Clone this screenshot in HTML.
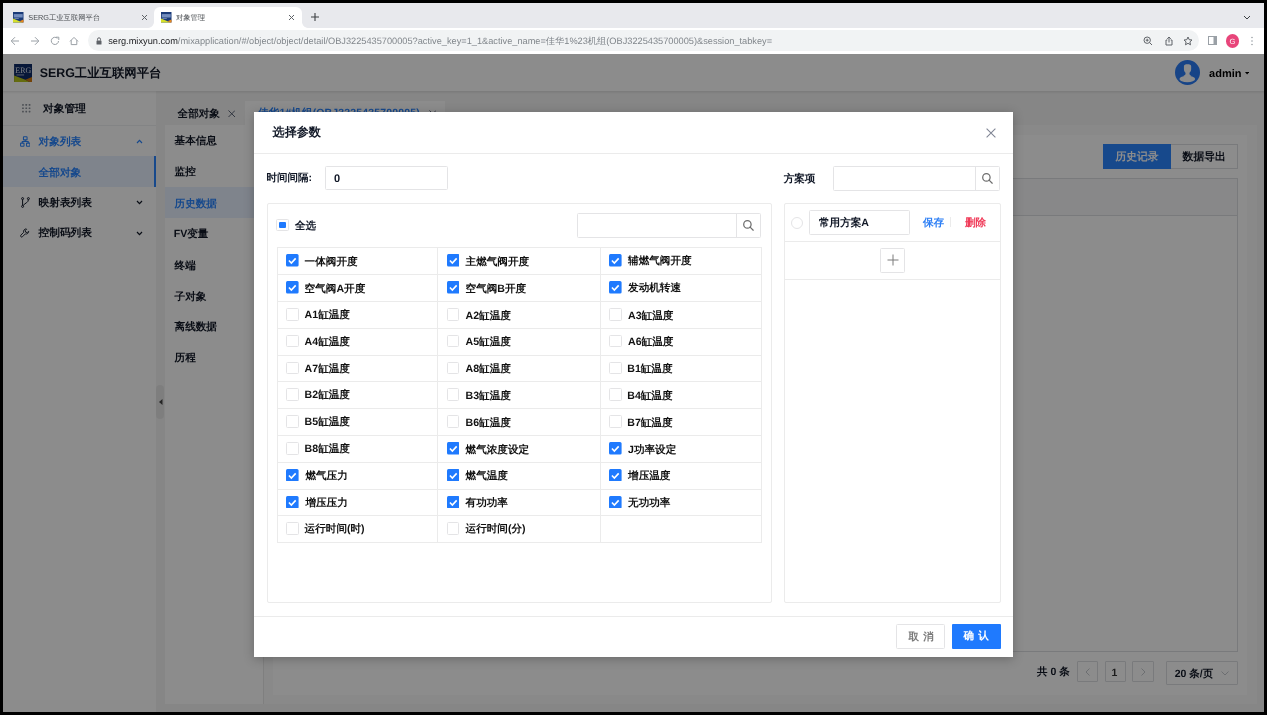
<!DOCTYPE html>
<html><head><meta charset="utf-8">
<style>
*{box-sizing:border-box;margin:0;padding:0}
html,body{width:1267px;height:715px;overflow:hidden;background:#000;font-family:"Liberation Sans",sans-serif;text-rendering:geometricPrecision}
.a{position:absolute}
.t{position:absolute;white-space:nowrap;line-height:1}
</style></head><body><div style="position:absolute;left:0;top:0;width:1267px;height:715px;background:#000;will-change:transform">
<div class="a" style="left:3px;top:3px;width:1261px;height:25px;background:#e8e9ed"></div>
<svg class="a" style="left:13.2px;top:12px" width="10.5" height="10.5" viewBox="0 0 20 20"><rect width="20" height="20" fill="#1a3a78"/><path d="M0 12.6L12.4 17.4L17.5 20H0Z" fill="#d6e02a"/><path d="M12.4 17.4L20 14.2V20H17.5Z" fill="#e8881c"/><rect x="1.5" y="4" width="17" height="6.5" fill="#8aa3cf" opacity=".8"/><rect x="2.6" y="11.6" width="8.4" height="1" fill="#b6c2da"/></svg>
<div class="t" style="left:28.32px;top:13.68px;font-size:7.3px;color:#4a4e52;">SERG工业互联网平台</div>
<svg class="a" style="left:140.8px;top:13.8px" width="7" height="7" viewBox="0 0 7 7"><path d="M1 1L6 6M6 1L1 6" stroke="#5f6368" stroke-width="1"/></svg>
<div class="a" style="left:154px;top:7px;width:148px;height:21px;background:#fff;border-radius:6px 6px 0 0"></div>
<div class="a" style="left:148px;top:22px;width:6px;height:6px;background:radial-gradient(circle at 0 0,transparent 5.5px,#fff 6.2px)"></div>
<div class="a" style="left:302px;top:22px;width:6px;height:6px;background:radial-gradient(circle at 100% 0,transparent 5.5px,#fff 6.2px)"></div>
<svg class="a" style="left:161px;top:12px" width="10.5" height="10.5" viewBox="0 0 20 20"><rect width="20" height="20" fill="#1a3a78"/><path d="M0 12.6L12.4 17.4L17.5 20H0Z" fill="#d6e02a"/><path d="M12.4 17.4L20 14.2V20H17.5Z" fill="#e8881c"/><rect x="1.5" y="4" width="17" height="6.5" fill="#8aa3cf" opacity=".8"/><rect x="2.6" y="11.6" width="8.4" height="1" fill="#b6c2da"/></svg>
<div class="t" style="left:175.88px;top:13.68px;font-size:7.3px;color:#4a4e52;">对象管理</div>
<svg class="a" style="left:288.3px;top:13.8px" width="7" height="7" viewBox="0 0 7 7"><path d="M1 1L6 6M6 1L1 6" stroke="#5f6368" stroke-width="1"/></svg>
<svg class="a" style="left:310.2px;top:12.4px" width="10" height="10" viewBox="0 0 10 10"><path d="M5 1V9M1 5H9" stroke="#3c4043" stroke-width="1.1"/></svg>
<svg class="a" style="left:1243.3px;top:15.2px" width="8" height="5" viewBox="0 0 8 5"><path d="M1 1L4 4L7 1" stroke="#3c4043" stroke-width="1" fill="none"/></svg>
<div class="a" style="left:3px;top:28px;width:1261px;height:26px;background:#fff"></div>
<svg class="a" style="left:10px;top:35.5px" width="10" height="10" viewBox="0 0 10 10"><path d="M9 5H1.5M5 1.2L1.2 5L5 8.8" stroke="#9aa0a6" stroke-width="1" fill="none"/></svg>
<svg class="a" style="left:29.5px;top:35.5px" width="10" height="10" viewBox="0 0 10 10"><path d="M1 5H8.5M5 1.2L8.8 5L5 8.8" stroke="#9aa0a6" stroke-width="1" fill="none"/></svg>
<svg class="a" style="left:49.5px;top:35.5px" width="10" height="10" viewBox="0 0 10 10"><path d="M8.5 5A3.6 3.6 0 1 1 7.4 2.3" stroke="#9aa0a6" stroke-width="1" fill="none"/><path d="M6 1.2H8.8V4" stroke="#9aa0a6" stroke-width="1" fill="none"/></svg>
<svg class="a" style="left:69px;top:36px" width="10" height="10" viewBox="0 0 10 10"><path d="M1 5.4L5 1.4L9 5.4M2.2 4.2V8.6H7.8V4.2" stroke="#9aa0a6" stroke-width="1" fill="none"/></svg>
<div class="a" style="left:88px;top:30px;width:1111px;height:21px;background:#f1f3f4;border-radius:11px"></div>
<svg class="a" style="left:95.5px;top:36.5px" width="6" height="8" viewBox="0 0 6 8"><path d="M1.5 3.5V2.3A1.5 1.5 0 0 1 4.5 2.3V3.5" stroke="#5f6368" stroke-width="1" fill="none"/><rect x="0.5" y="3.5" width="5" height="4" rx=".6" fill="#5f6368"/></svg>
<div class="t" style="left:108.20px;top:36.91px;font-size:9.23px;color:#80868b;"><span style="color:#202124">serg.mixyun.com</span>/mixapplication/#/object/object/detail/OBJ3225435700005?active_key=1_1&amp;active_name=佳华1%23机组(OBJ3225435700005)&amp;session_tabkey=</div>
<svg class="a" style="left:1143px;top:36px" width="10" height="10" viewBox="0 0 10 10"><circle cx="4.2" cy="4.2" r="3.2" stroke="#5f6368" stroke-width="1" fill="none"/><path d="M6.5 6.5L9 9M4.2 2.7V5.7M2.7 4.2H5.7" stroke="#5f6368" stroke-width="1"/></svg>
<svg class="a" style="left:1163.5px;top:35.5px" width="10" height="10" viewBox="0 0 10 10"><path d="M3.3 4H2V9H8V4H6.7M5 6.5V1M3.2 2.8L5 1L6.8 2.8" stroke="#5f6368" stroke-width="1" fill="none"/></svg>
<svg class="a" style="left:1183px;top:35.5px" width="10" height="10" viewBox="0 0 10 10"><path d="M5 1L6.2 3.7L9 4L6.9 5.9L7.5 8.8L5 7.3L2.5 8.8L3.1 5.9L1 4L3.8 3.7Z" stroke="#5f6368" stroke-width="1" fill="none" stroke-linejoin="round"/></svg>
<svg class="a" style="left:1207.5px;top:36px" width="10" height="9" viewBox="0 0 10 9"><rect x=".5" y=".5" width="8" height="8" stroke="#9aa0a6" stroke-width="1" fill="none"/><rect x="5.5" y=".5" width="3" height="8" fill="#9aa0a6"/></svg>
<div class="a" style="left:1225.7px;top:34.3px;width:13.3px;height:13.3px;border-radius:50%;background:#e8457a"></div>
<div class="t" style="left:1229.5px;top:37.6px;font-size:7.5px;color:#fff">G</div>
<svg class="a" style="left:1250px;top:36px" width="4" height="10" viewBox="0 0 4 10"><circle cx="2" cy="1.5" r=".8" fill="#9aa0a6"/><circle cx="2" cy="5" r=".8" fill="#9aa0a6"/><circle cx="2" cy="8.5" r=".8" fill="#9aa0a6"/></svg>
<div class="a" style="left:3px;top:54px;width:1261px;height:658px;background:#f4f4f4"></div>
<div class="a" style="left:3px;top:54px;width:1261px;height:37px;background:#fff"></div>
<svg class="a" style="left:13.7px;top:63.7px" width="18.4" height="18.2" viewBox="0 0 20 20"><rect width="20" height="20" fill="#0d2a66"/><path d="M0 12.6L12.4 17.4L17.5 20H0Z" fill="#b9c51c"/><path d="M12.4 17.4L20 14.2V20H17.5Z" fill="#d1780f"/><text x="1.4" y="10.4" font-size="9.2" font-family="Liberation Serif" fill="#e4e9f3" textLength="17.4" lengthAdjust="spacingAndGlyphs">ERG</text><rect x="2.6" y="11.6" width="8.4" height=".9" fill="#b6c2da"/></svg>
<div class="t" style="left:39.66px;top:66.99px;font-size:12.4px;font-weight:bold;color:#111827;">SERG工业互联网平台</div>
<div class="a" style="left:1175.2px;top:60.3px;width:24.8px;height:24.8px;border-radius:50%;background:#2a7cf6;overflow:hidden"><svg width="24.8" height="24.8" viewBox="0 0 25 25"><g fill="#fff"><path d="M9 6.2C9 4.9 10.4 4.4 12.6 4.4S16.3 4.9 16.3 6.2V9.2C16.3 11 15.2 12.3 14.6 12.8V14.2C14.6 15 15.6 15.6 16.6 16.1L12.6 17.5L8.4 16.1C9.5 15.6 10.6 15 10.6 14.2V12.8C10 12.3 9 11 9 9.2Z"/><ellipse cx="12.4" cy="19.2" rx="7.9" ry="3.2"/></g></svg></div>
<div class="t" style="left:1209.10px;top:69.10px;font-size:11px;font-weight:bold;color:#000;">admin</div>
<svg class="a" style="left:1245.3px;top:72.3px" width="4.2" height="2.6" viewBox="0 0 4.2 2.6"><path d="M0 0H4.2L2.1 2.6Z" fill="#000"/></svg>
<div class="a" style="left:3px;top:91px;width:153px;height:621px;background:#fff"></div>
<div class="a" style="left:3px;top:125px;width:153px;height:1px;background:#eef0f3"></div>
<svg class="a" style="left:22px;top:104px" width="8.5" height="8.5" viewBox="0 0 9 9"><g fill="#8a9099"><rect x=".1" y=".1" width="1.8" height="1.8" rx=".4"/><rect x="3.6" y=".1" width="1.8" height="1.8" rx=".4"/><rect x="7.1" y=".1" width="1.8" height="1.8" rx=".4"/><rect x=".1" y="3.6" width="1.8" height="1.8" rx=".4"/><rect x="3.6" y="3.6" width="1.8" height="1.8" rx=".4"/><rect x="7.1" y="3.6" width="1.8" height="1.8" rx=".4"/><rect x=".1" y="7.1" width="1.8" height="1.8" rx=".4"/><rect x="3.6" y="7.1" width="1.8" height="1.8" rx=".4"/><rect x="7.1" y="7.1" width="1.8" height="1.8" rx=".4"/></g></svg>
<div class="t" style="left:43.08px;top:104.20px;font-size:10.7px;font-weight:bold;color:#111827;">对象管理</div>
<svg class="a" style="left:19.6px;top:136px" width="10.5" height="11" viewBox="0 0 11 11"><g stroke="#2a85ff" stroke-width="1.1" fill="none"><rect x="3.6" y=".6" width="3.8" height="3.2" rx=".5"/><rect x=".6" y="7.2" width="3.6" height="3.2" rx=".5"/><rect x="6.8" y="7.2" width="3.6" height="3.2" rx=".5"/><path d="M5.5 3.8V5.5M2.4 7.2V5.5H8.6V7.2"/></g></svg>
<div class="t" style="left:38.50px;top:137.22px;font-size:10.7px;font-weight:bold;color:#2a85ff;">对象列表</div>
<svg class="a" style="left:135.5px;top:139px" width="7" height="5" viewBox="0 0 7 5"><path d="M1 4L3.5 1.3L6 4" stroke="#2a85ff" stroke-width="1.2" fill="none"/></svg>
<div class="a" style="left:3px;top:156.4px;width:153px;height:30.6px;background:#e8f1ff"></div>
<div class="a" style="left:154.2px;top:156.4px;width:2.2px;height:30.6px;background:#2a85ff"></div>
<div class="t" style="left:38.50px;top:167.68px;font-size:10.7px;font-weight:bold;color:#2a85ff;">全部对象</div>
<svg class="a" style="left:20.5px;top:197px" width="9" height="11" viewBox="0 0 9 11"><g stroke="#111827" stroke-width="1" fill="none"><circle cx="1.6" cy="1.6" r="1"/><circle cx="7.4" cy="1.6" r="1"/><circle cx="1.6" cy="9.4" r="1"/><path d="M1.6 2.6V8.4M7.4 2.6C7.4 5.5 4.5 5.8 2.2 8.4"/></g></svg>
<div class="t" style="left:38.50px;top:197.76px;font-size:10.7px;font-weight:bold;color:#111827;">映射表列表</div>
<svg class="a" style="left:135.5px;top:200px" width="7" height="5" viewBox="0 0 7 5"><path d="M1 1L3.5 3.7L6 1" stroke="#111827" stroke-width="1.2" fill="none"/></svg>
<svg class="a" style="left:20px;top:228px" width="10" height="10" viewBox="0 0 10 10"><path d="M6.3 .9a2.6 2.6 0 0 0-2.6 3.4L.9 7.1a1.1 1.1 0 0 0 1.6 1.6l2.8-2.8a2.6 2.6 0 0 0 3.4-2.6l-1.5 1.3l-1.5-.4l-.4-1.5l1.3-1.5Z" stroke="#111827" stroke-width=".9" fill="none" stroke-linejoin="round"/></svg>
<div class="t" style="left:38.50px;top:228.34px;font-size:10.7px;font-weight:bold;color:#111827;">控制码列表</div>
<svg class="a" style="left:135.5px;top:231px" width="7" height="5" viewBox="0 0 7 5"><path d="M1 1L3.5 3.7L6 1" stroke="#111827" stroke-width="1.2" fill="none"/></svg>
<div class="a" style="left:156.2px;top:385.2px;width:8.2px;height:34px;border-radius:4px;background:#e6e6e6"></div>
<svg class="a" style="left:158.5px;top:399px" width="4" height="6" viewBox="0 0 4 6"><path d="M3.5 0V6L0 3Z" fill="#444"/></svg>
<div class="t" style="left:177.54px;top:108.76px;font-size:10.6px;font-weight:bold;color:#111827;">全部对象</div>
<svg class="a" style="left:227.5px;top:109.5px" width="7.5" height="7.5" viewBox="0 0 8 8"><path d="M.5 .5L7.5 7.5M7.5 .5L.5 7.5" stroke="#515a6e" stroke-width="1"/></svg>
<div class="a" style="left:245px;top:101.3px;width:200px;height:24px;background:#fff"></div>
<div class="t" style="left:258.08px;top:107.80px;font-size:10.5px;font-weight:bold;color:#2a85ff;letter-spacing:.15px">佳华1#机组(OBJ3225435700005)</div>
<svg class="a" style="left:428.5px;top:109.5px" width="7.5" height="7.5" viewBox="0 0 8 8"><path d="M.5 .5L7.5 7.5M7.5 .5L.5 7.5" stroke="#515a6e" stroke-width="1"/></svg>
<div class="a" style="left:165px;top:125px;width:1091.6px;height:579px;background:#fafafa"></div>
<div class="a" style="left:165px;top:125px;width:98px;height:579px;background:#fff"></div>
<div class="a" style="left:165px;top:187.2px;width:98px;height:30.8px;background:#e8f1ff"></div>
<div class="a" style="left:263.2px;top:125px;width:1px;height:579px;background:#e8e8e8"></div>
<div class="t" style="left:174.54px;top:136.34px;font-size:10.6px;font-weight:bold;color:#111827;">基本信息</div>
<div class="t" style="left:174.54px;top:167.26px;font-size:10.6px;font-weight:bold;color:#111827;">监控</div>
<div class="t" style="left:174.54px;top:198.76px;font-size:10.6px;font-weight:bold;color:#2a85ff;">历史数据</div>
<div class="t" style="left:173.74px;top:229.30px;font-size:10.6px;font-weight:bold;color:#111827;">FV变量</div>
<div class="t" style="left:174.54px;top:260.66px;font-size:10.6px;font-weight:bold;color:#111827;">终端</div>
<div class="t" style="left:174.54px;top:291.60px;font-size:10.6px;font-weight:bold;color:#111827;">子对象</div>
<div class="t" style="left:174.54px;top:321.76px;font-size:10.6px;font-weight:bold;color:#111827;">离线数据</div>
<div class="t" style="left:174.54px;top:352.72px;font-size:10.6px;font-weight:bold;color:#111827;">历程</div>
<div class="a" style="left:273px;top:134.8px;width:974px;height:560px;background:#fff"></div>
<div class="a" style="left:1103.4px;top:144.2px;width:67.4px;height:24.6px;background:#2a85ff"></div>
<div class="t" style="left:1115.46px;top:151.68px;font-size:10.8px;font-weight:bold;color:#fff;">历史记录</div>
<div class="a" style="left:1170.8px;top:144.2px;width:67px;height:24.6px;border:1px solid #dcdee2;border-left:0"></div>
<div class="t" style="left:1182.58px;top:151.68px;font-size:10.8px;font-weight:bold;color:#111827;">数据导出</div>
<div class="a" style="left:273px;top:178.4px;width:964.7px;height:473.4px;border:1px solid #dcdee2"></div>
<div class="a" style="left:273px;top:178.4px;width:964.7px;height:38px;background:#f8f8f9;border:1px solid #dcdee2"></div>
<div class="t" style="left:1037.00px;top:667.34px;font-size:10.5px;font-weight:bold;color:#111827;">共 0 条</div>
<div class="a" style="left:1077.3px;top:661.4px;width:21.1px;height:21.1px;border:1px solid #dcdee2;border-radius:1px"></div>
<svg class="a" style="left:1085px;top:668px" width="5" height="8" viewBox="0 0 5 8"><path d="M4.5 .5L1 4L4.5 7.5" stroke="#c5c8ce" stroke-width="1" fill="none"/></svg>
<div class="a" style="left:1104.5px;top:661.4px;width:21.5px;height:21.1px;border:1px solid #dcdee2;border-radius:1px"></div>
<div class="t" style="left:1111.42px;top:667.70px;font-size:10.5px;font-weight:bold;color:#333;">1</div>
<div class="a" style="left:1132px;top:661.4px;width:21.6px;height:21.1px;border:1px solid #dcdee2;border-radius:1px"></div>
<svg class="a" style="left:1140.5px;top:668px" width="5" height="8" viewBox="0 0 5 8"><path d="M.5 .5L4 4L.5 7.5" stroke="#c5c8ce" stroke-width="1" fill="none"/></svg>
<div class="a" style="left:1166.2px;top:661.4px;width:71.6px;height:24.1px;border:1px solid #dcdee2;border-radius:1px"></div>
<div class="t" style="left:1174.66px;top:668.50px;font-size:10.5px;font-weight:bold;color:#111827;">20 条/页</div>
<svg class="a" style="left:1220.5px;top:670.5px" width="8" height="5" viewBox="0 0 8 5"><path d="M.5 .5L4 4L7.5 .5" stroke="#c5c8ce" stroke-width="1" fill="none"/></svg>
<div class="a" style="left:3px;top:91px;width:1261px;height:3px;background:linear-gradient(rgba(0,0,0,.09),rgba(0,0,0,0))"></div>
<div class="a" style="left:3px;top:54px;width:1261px;height:658px;background:rgba(0,0,0,.45)"></div>
<div class="a" style="left:254px;top:111.6px;width:759.2px;height:545.2px;background:#fff;box-shadow:0 2px 10px rgba(0,0,0,.25)"></div>
<div class="t" style="left:272.58px;top:126.36px;font-size:12.1px;font-weight:bold;color:#111827;">选择参数</div>
<svg class="a" style="left:986.3px;top:127.8px" width="10" height="10" viewBox="0 0 10 10"><path d="M.6 .6L9.4 9.4M9.4 .6L.6 9.4" stroke="#808695" stroke-width="1.1"/></svg>
<div class="a" style="left:254px;top:153px;width:759px;height:1px;background:#ebebeb"></div>
<div class="t" style="left:266.54px;top:173.46px;font-size:10.5px;font-weight:bold;color:#111827;">时间间隔:</div>
<div class="a" style="left:325px;top:166.4px;width:123px;height:24px;border:1px solid #e4e4e6;border-radius:1.5px"></div>
<div class="t" style="left:334.00px;top:173.85px;font-size:11px;font-weight:bold;color:#111827;">0</div>
<div class="a" style="left:266.6px;top:203.3px;width:505px;height:399.3px;border:1px solid #ebebeb;border-radius:2px"></div>
<div class="a" style="left:276.3px;top:218.7px;width:12.5px;height:12.5px;border:1px solid #e4e4e6;border-radius:1.5px"></div>
<div class="a" style="left:279.2px;top:221.7px;width:6.6px;height:6.6px;background:#1f7afe;border-radius:1px"></div>
<div class="t" style="left:295.04px;top:220.80px;font-size:10.5px;font-weight:bold;color:#111827;">全选</div>
<div class="a" style="left:576.8px;top:213.2px;width:184px;height:24.4px;border:1px solid #e4e4e6;border-radius:1.5px"></div>
<div class="a" style="left:735.8px;top:213.2px;width:1px;height:24.4px;background:#e4e4e6"></div>
<svg class="a" style="left:743px;top:220px" width="11" height="11" viewBox="0 0 11 11"><circle cx="4.4" cy="4.4" r="3.7" stroke="#6e6e6e" stroke-width="1.25" fill="none"/><path d="M7.1 7.1L10.2 10.2" stroke="#6e6e6e" stroke-width="1.25" stroke-linecap="round"/></svg>
<div class="a" style="left:276.5px;top:247.3px;width:485.0px;height:295.80px;border:1px solid #ebebeb"></div>
<div class="a" style="left:276.5px;top:274.10px;width:485.0px;height:1px;background:#ebebeb"></div>
<div class="a" style="left:276.5px;top:300.90px;width:485.0px;height:1px;background:#ebebeb"></div>
<div class="a" style="left:276.5px;top:327.70px;width:485.0px;height:1px;background:#ebebeb"></div>
<div class="a" style="left:276.5px;top:354.50px;width:485.0px;height:1px;background:#ebebeb"></div>
<div class="a" style="left:276.5px;top:381.30px;width:485.0px;height:1px;background:#ebebeb"></div>
<div class="a" style="left:276.5px;top:408.10px;width:485.0px;height:1px;background:#ebebeb"></div>
<div class="a" style="left:276.5px;top:434.90px;width:485.0px;height:1px;background:#ebebeb"></div>
<div class="a" style="left:276.5px;top:461.70px;width:485.0px;height:1px;background:#ebebeb"></div>
<div class="a" style="left:276.5px;top:488.50px;width:485.0px;height:1px;background:#ebebeb"></div>
<div class="a" style="left:276.5px;top:515.30px;width:485.0px;height:1px;background:#ebebeb"></div>
<div class="a" style="left:437.3px;top:247.3px;width:1px;height:294.80px;background:#ebebeb"></div>
<div class="a" style="left:599.6px;top:247.3px;width:1px;height:294.80px;background:#ebebeb"></div>
<svg class="a" style="left:286.10px;top:254.40px" width="12.6" height="12.6" viewBox="0 0 12.5 12.5"><rect width="12.5" height="12.5" rx="1.5" fill="#1f7afe"/><path d="M2.9 6.5L5.3 8.9L9.6 4.3" stroke="#fff" stroke-width="1.6" fill="none"/></svg>
<div class="t" style="left:304.62px;top:256.68px;font-size:10.6px;font-weight:bold;color:#111;">一体阀开度</div>
<svg class="a" style="left:446.90px;top:254.40px" width="12.6" height="12.6" viewBox="0 0 12.5 12.5"><rect width="12.5" height="12.5" rx="1.5" fill="#1f7afe"/><path d="M2.9 6.5L5.3 8.9L9.6 4.3" stroke="#fff" stroke-width="1.6" fill="none"/></svg>
<div class="t" style="left:465.58px;top:256.68px;font-size:10.6px;font-weight:bold;color:#111;">主燃气阀开度</div>
<svg class="a" style="left:609.20px;top:254.40px" width="12.6" height="12.6" viewBox="0 0 12.5 12.5"><rect width="12.5" height="12.5" rx="1.5" fill="#1f7afe"/><path d="M2.9 6.5L5.3 8.9L9.6 4.3" stroke="#fff" stroke-width="1.6" fill="none"/></svg>
<div class="t" style="left:628.04px;top:256.28px;font-size:10.6px;font-weight:bold;color:#111;">辅燃气阀开度</div>
<svg class="a" style="left:286.10px;top:281.20px" width="12.6" height="12.6" viewBox="0 0 12.5 12.5"><rect width="12.5" height="12.5" rx="1.5" fill="#1f7afe"/><path d="M2.9 6.5L5.3 8.9L9.6 4.3" stroke="#fff" stroke-width="1.6" fill="none"/></svg>
<div class="t" style="left:304.62px;top:283.64px;font-size:10.6px;font-weight:bold;color:#111;">空气阀A开度</div>
<svg class="a" style="left:446.90px;top:281.20px" width="12.6" height="12.6" viewBox="0 0 12.5 12.5"><rect width="12.5" height="12.5" rx="1.5" fill="#1f7afe"/><path d="M2.9 6.5L5.3 8.9L9.6 4.3" stroke="#fff" stroke-width="1.6" fill="none"/></svg>
<div class="t" style="left:465.58px;top:283.64px;font-size:10.6px;font-weight:bold;color:#111;">空气阀B开度</div>
<svg class="a" style="left:609.20px;top:281.20px" width="12.6" height="12.6" viewBox="0 0 12.5 12.5"><rect width="12.5" height="12.5" rx="1.5" fill="#1f7afe"/><path d="M2.9 6.5L5.3 8.9L9.6 4.3" stroke="#fff" stroke-width="1.6" fill="none"/></svg>
<div class="t" style="left:628.04px;top:283.24px;font-size:10.6px;font-weight:bold;color:#111;">发动机转速</div>
<div class="a" style="left:286.10px;top:308.00px;width:12.6px;height:12.6px;border:1px solid #e4e4e6;border-radius:1.5px"></div>
<div class="t" style="left:304.62px;top:309.80px;font-size:10.6px;font-weight:bold;color:#111;">A1缸温度</div>
<div class="a" style="left:446.90px;top:308.00px;width:12.6px;height:12.6px;border:1px solid #e4e4e6;border-radius:1.5px"></div>
<div class="t" style="left:465.58px;top:310.60px;font-size:10.6px;font-weight:bold;color:#111;">A2缸温度</div>
<div class="a" style="left:609.20px;top:308.00px;width:12.6px;height:12.6px;border:1px solid #e4e4e6;border-radius:1.5px"></div>
<div class="t" style="left:628.04px;top:310.60px;font-size:10.6px;font-weight:bold;color:#111;">A3缸温度</div>
<div class="a" style="left:286.10px;top:334.80px;width:12.6px;height:12.6px;border:1px solid #e4e4e6;border-radius:1.5px"></div>
<div class="t" style="left:304.62px;top:336.76px;font-size:10.6px;font-weight:bold;color:#111;">A4缸温度</div>
<div class="a" style="left:446.90px;top:334.80px;width:12.6px;height:12.6px;border:1px solid #e4e4e6;border-radius:1.5px"></div>
<div class="t" style="left:465.58px;top:336.76px;font-size:10.6px;font-weight:bold;color:#111;">A5缸温度</div>
<div class="a" style="left:609.20px;top:334.80px;width:12.6px;height:12.6px;border:1px solid #e4e4e6;border-radius:1.5px"></div>
<div class="t" style="left:628.04px;top:336.76px;font-size:10.6px;font-weight:bold;color:#111;">A6缸温度</div>
<div class="a" style="left:286.10px;top:361.60px;width:12.6px;height:12.6px;border:1px solid #e4e4e6;border-radius:1.5px"></div>
<div class="t" style="left:304.62px;top:363.72px;font-size:10.6px;font-weight:bold;color:#111;">A7缸温度</div>
<div class="a" style="left:446.90px;top:361.60px;width:12.6px;height:12.6px;border:1px solid #e4e4e6;border-radius:1.5px"></div>
<div class="t" style="left:465.58px;top:363.72px;font-size:10.6px;font-weight:bold;color:#111;">A8缸温度</div>
<div class="a" style="left:609.20px;top:361.60px;width:12.6px;height:12.6px;border:1px solid #e4e4e6;border-radius:1.5px"></div>
<div class="t" style="left:627.24px;top:363.72px;font-size:10.6px;font-weight:bold;color:#111;">B1缸温度</div>
<div class="a" style="left:286.10px;top:388.40px;width:12.6px;height:12.6px;border:1px solid #e4e4e6;border-radius:1.5px"></div>
<div class="t" style="left:304.62px;top:389.88px;font-size:10.6px;font-weight:bold;color:#111;">B2缸温度</div>
<div class="a" style="left:446.90px;top:388.40px;width:12.6px;height:12.6px;border:1px solid #e4e4e6;border-radius:1.5px"></div>
<div class="t" style="left:465.58px;top:390.68px;font-size:10.6px;font-weight:bold;color:#111;">B3缸温度</div>
<div class="a" style="left:609.20px;top:388.40px;width:12.6px;height:12.6px;border:1px solid #e4e4e6;border-radius:1.5px"></div>
<div class="t" style="left:627.24px;top:390.68px;font-size:10.6px;font-weight:bold;color:#111;">B4缸温度</div>
<div class="a" style="left:286.10px;top:415.20px;width:12.6px;height:12.6px;border:1px solid #e4e4e6;border-radius:1.5px"></div>
<div class="t" style="left:304.62px;top:416.84px;font-size:10.6px;font-weight:bold;color:#111;">B5缸温度</div>
<div class="a" style="left:446.90px;top:415.20px;width:12.6px;height:12.6px;border:1px solid #e4e4e6;border-radius:1.5px"></div>
<div class="t" style="left:465.58px;top:417.64px;font-size:10.6px;font-weight:bold;color:#111;">B6缸温度</div>
<div class="a" style="left:609.20px;top:415.20px;width:12.6px;height:12.6px;border:1px solid #e4e4e6;border-radius:1.5px"></div>
<div class="t" style="left:627.24px;top:417.64px;font-size:10.6px;font-weight:bold;color:#111;">B7缸温度</div>
<div class="a" style="left:286.10px;top:442.00px;width:12.6px;height:12.6px;border:1px solid #e4e4e6;border-radius:1.5px"></div>
<div class="t" style="left:304.62px;top:443.80px;font-size:10.6px;font-weight:bold;color:#111;">B8缸温度</div>
<svg class="a" style="left:446.90px;top:442.00px" width="12.6" height="12.6" viewBox="0 0 12.5 12.5"><rect width="12.5" height="12.5" rx="1.5" fill="#1f7afe"/><path d="M2.9 6.5L5.3 8.9L9.6 4.3" stroke="#fff" stroke-width="1.6" fill="none"/></svg>
<div class="t" style="left:465.58px;top:444.60px;font-size:10.6px;font-weight:bold;color:#111;">燃气浓度设定</div>
<svg class="a" style="left:609.20px;top:442.00px" width="12.6" height="12.6" viewBox="0 0 12.5 12.5"><rect width="12.5" height="12.5" rx="1.5" fill="#1f7afe"/><path d="M2.9 6.5L5.3 8.9L9.6 4.3" stroke="#fff" stroke-width="1.6" fill="none"/></svg>
<div class="t" style="left:628.04px;top:444.60px;font-size:10.6px;font-weight:bold;color:#111;">J功率设定</div>
<svg class="a" style="left:286.10px;top:468.80px" width="12.6" height="12.6" viewBox="0 0 12.5 12.5"><rect width="12.5" height="12.5" rx="1.5" fill="#1f7afe"/><path d="M2.9 6.5L5.3 8.9L9.6 4.3" stroke="#fff" stroke-width="1.6" fill="none"/></svg>
<div class="t" style="left:305.42px;top:470.76px;font-size:10.6px;font-weight:bold;color:#111;">燃气压力</div>
<svg class="a" style="left:446.90px;top:468.80px" width="12.6" height="12.6" viewBox="0 0 12.5 12.5"><rect width="12.5" height="12.5" rx="1.5" fill="#1f7afe"/><path d="M2.9 6.5L5.3 8.9L9.6 4.3" stroke="#fff" stroke-width="1.6" fill="none"/></svg>
<div class="t" style="left:465.58px;top:470.76px;font-size:10.6px;font-weight:bold;color:#111;">燃气温度</div>
<svg class="a" style="left:609.20px;top:468.80px" width="12.6" height="12.6" viewBox="0 0 12.5 12.5"><rect width="12.5" height="12.5" rx="1.5" fill="#1f7afe"/><path d="M2.9 6.5L5.3 8.9L9.6 4.3" stroke="#fff" stroke-width="1.6" fill="none"/></svg>
<div class="t" style="left:628.04px;top:470.76px;font-size:10.6px;font-weight:bold;color:#111;">增压温度</div>
<svg class="a" style="left:286.10px;top:495.60px" width="12.6" height="12.6" viewBox="0 0 12.5 12.5"><rect width="12.5" height="12.5" rx="1.5" fill="#1f7afe"/><path d="M2.9 6.5L5.3 8.9L9.6 4.3" stroke="#fff" stroke-width="1.6" fill="none"/></svg>
<div class="t" style="left:305.42px;top:497.72px;font-size:10.6px;font-weight:bold;color:#111;">增压压力</div>
<svg class="a" style="left:446.90px;top:495.60px" width="12.6" height="12.6" viewBox="0 0 12.5 12.5"><rect width="12.5" height="12.5" rx="1.5" fill="#1f7afe"/><path d="M2.9 6.5L5.3 8.9L9.6 4.3" stroke="#fff" stroke-width="1.6" fill="none"/></svg>
<div class="t" style="left:465.58px;top:497.72px;font-size:10.6px;font-weight:bold;color:#111;">有功功率</div>
<svg class="a" style="left:609.20px;top:495.60px" width="12.6" height="12.6" viewBox="0 0 12.5 12.5"><rect width="12.5" height="12.5" rx="1.5" fill="#1f7afe"/><path d="M2.9 6.5L5.3 8.9L9.6 4.3" stroke="#fff" stroke-width="1.6" fill="none"/></svg>
<div class="t" style="left:628.04px;top:497.72px;font-size:10.6px;font-weight:bold;color:#111;">无功功率</div>
<div class="a" style="left:286.10px;top:522.40px;width:12.6px;height:12.6px;border:1px solid #e4e4e6;border-radius:1.5px"></div>
<div class="t" style="left:304.62px;top:523.88px;font-size:10.6px;font-weight:bold;color:#111;">运行时间(时)</div>
<div class="a" style="left:446.90px;top:522.40px;width:12.6px;height:12.6px;border:1px solid #e4e4e6;border-radius:1.5px"></div>
<div class="t" style="left:465.58px;top:523.88px;font-size:10.6px;font-weight:bold;color:#111;">运行时间(分)</div>
<div class="t" style="left:783.66px;top:174.26px;font-size:10.6px;font-weight:bold;color:#111827;">方案项</div>
<div class="a" style="left:833px;top:166.4px;width:166.7px;height:24.2px;border:1px solid #e4e4e6;border-radius:1.5px"></div>
<div class="a" style="left:975px;top:166.4px;width:1px;height:24.2px;background:#e4e4e6"></div>
<svg class="a" style="left:982px;top:173px" width="11" height="11" viewBox="0 0 11 11"><circle cx="4.4" cy="4.4" r="3.7" stroke="#6e6e6e" stroke-width="1.25" fill="none"/><path d="M7.1 7.1L10.2 10.2" stroke="#6e6e6e" stroke-width="1.25" stroke-linecap="round"/></svg>
<div class="a" style="left:784.2px;top:203px;width:216.5px;height:400px;border:1px solid #ebebeb;border-radius:2px"></div>
<div class="a" style="left:791px;top:216.8px;width:12px;height:12px;border:1px solid #e4e4e6;border-radius:50%"></div>
<div class="a" style="left:809.2px;top:210.4px;width:101.3px;height:24.4px;border:1px solid #e4e4e6;border-radius:1.5px"></div>
<div class="t" style="left:818.96px;top:218.24px;font-size:10.6px;font-weight:bold;color:#111827;">常用方案A</div>
<div class="t" style="left:923.00px;top:217.84px;font-size:10.6px;font-weight:bold;color:#2d7ff5;">保存</div>
<div class="a" style="left:950.3px;top:217px;width:1px;height:9.6px;background:#ebebeb"></div>
<div class="t" style="left:965.00px;top:217.84px;font-size:10.6px;font-weight:bold;color:#f03a58;">删除</div>
<div class="a" style="left:784.7px;top:241px;width:216px;height:1px;background:#ebebeb"></div>
<div class="a" style="left:880.1px;top:248.2px;width:24.6px;height:24.6px;border:1px solid #e4e4e6;border-radius:1.5px"></div>
<svg class="a" style="left:886.5px;top:254.2px" width="12" height="12" viewBox="0 0 12 12"><path d="M6 .5V11.5M.5 6H11.5" stroke="#7a7a7a" stroke-width="1"/></svg>
<div class="a" style="left:784.7px;top:279px;width:216px;height:1px;background:#ebebeb"></div>
<div class="a" style="left:254px;top:616px;width:759px;height:1px;background:#ebebeb"></div>
<div class="a" style="left:896.4px;top:624.3px;width:48.6px;height:24.3px;border:1px solid #e4e4e6;border-radius:1.5px"></div>
<div class="t" style="left:908.54px;top:632.26px;font-size:10.5px;font-weight:bold;color:#7a7a7a;letter-spacing:.6px">取 消</div>
<div class="a" style="left:951.6px;top:624.3px;width:49.4px;height:24.3px;background:#1f7afe;border-radius:1px"></div>
<div class="t" style="left:963.58px;top:631.46px;font-size:10.5px;font-weight:bold;color:#fff;letter-spacing:.6px">确 认</div>
</div></body></html>
